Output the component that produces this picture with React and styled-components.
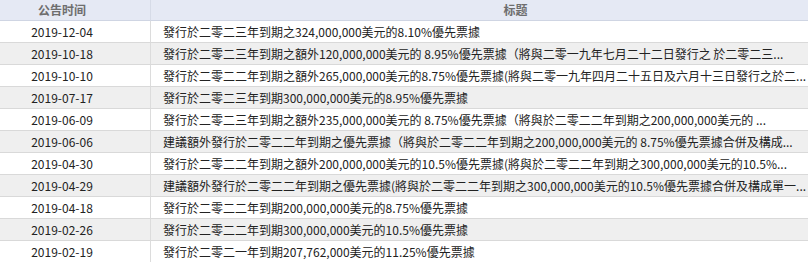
import React from "react";
import styled, { createGlobalStyle } from "styled-components";

const GlobalStyle = createGlobalStyle`
  html, body {
    margin: 0;
    padding: 0;
    background: #fff;
    overflow: hidden;
  }
  body {
    font-family: "Noto Sans CJK SC", "Noto Sans CJK TC", sans-serif;
  }
`;

const Table = styled.div`
  width: 808px;
  display: grid;
  grid-template-columns: 151px 1fr;
  font-size: 12px;
  color: #222;
  white-space: nowrap;
`;

const HeadCell = styled.div`
  height: 20px;
  line-height: 20px;
  background: #e5e9f4;
  border-bottom: 1px solid #cfd5e3;
  border-right: ${(p) => (p.$first ? "1px solid #d6dbe7" : "none")};
  box-sizing: content-box;
  font-weight: bold;
  color: #6e6e6e;
  text-align: center;
  padding: ${(p) => (p.$first ? "0 26px 0 0" : "0 0 0 72px")};
`;

const Cell = styled.div`
  height: 21px;
  line-height: 21px;
  background: ${(p) => (p.$alt ? "#efefef" : "#fff")};
  border-bottom: 1px solid #d9d9d9;
  border-right: ${(p) => (p.$date ? "1px solid #dcdcdc" : "none")};
  text-align: ${(p) => (p.$date ? "center" : "left")};
  padding: ${(p) => (p.$date ? "0 26px 0 0" : "0 0 0 12px")};
  overflow: hidden;
`;

const rows = [
  ["2019-12-04", "發行於二零二三年到期之324,000,000美元的8.10%優先票據"],
  ["2019-10-18", "發行於二零二三年到期之額外120,000,000美元的 8.95%優先票據（將與二零一九年七月二十二日發行之 於二零二三..."],
  ["2019-10-10", "發行於二零二二年到期之額外265,000,000美元的8.75%優先票據(將與二零一九年四月二十五日及六月十三日發行之於二..."],
  ["2019-07-17", "發行於二零二三年到期300,000,000美元的8.95%優先票據"],
  ["2019-06-09", "發行於二零二三年到期之額外235,000,000美元的 8.75%優先票據（將與於二零二二年到期之200,000,000美元的 ..."],
  ["2019-06-06", "建議額外發行於二零二二年到期之優先票據（將與於二零二二年到期之200,000,000美元的 8.75%優先票據合併及構成..."],
  ["2019-04-30", "發行於二零二二年到期之額外200,000,000美元的10.5%優先票據(將與於二零二二年到期之300,000,000美元的10.5%..."],
  ["2019-04-29", "建議額外發行於二零二二年到期之優先票據(將與於二零二二年到期之300,000,000美元的10.5%優先票據合併及構成單一..."],
  ["2019-04-18", "發行於二零二二年到期200,000,000美元的8.75%優先票據"],
  ["2019-02-26", "發行於二零二二年到期300,000,000美元的10.5%優先票據"],
  ["2019-02-19", "發行於二零二一年到期207,762,000美元的11.25%優先票據"],
];

const App = () => {
  return (
    <>
      <GlobalStyle />
      <Table>
        <HeadCell $first>公告时间</HeadCell>
        <HeadCell>标题</HeadCell>
        {rows.map(([date, title], i) => (
          <React.Fragment key={date + i}>
            <Cell $date $alt={i % 2 === 1}>{date}</Cell>
            <Cell $alt={i % 2 === 1}>{title}</Cell>
          </React.Fragment>
        ))}
      </Table>
    </>
  );
};

export default App;
